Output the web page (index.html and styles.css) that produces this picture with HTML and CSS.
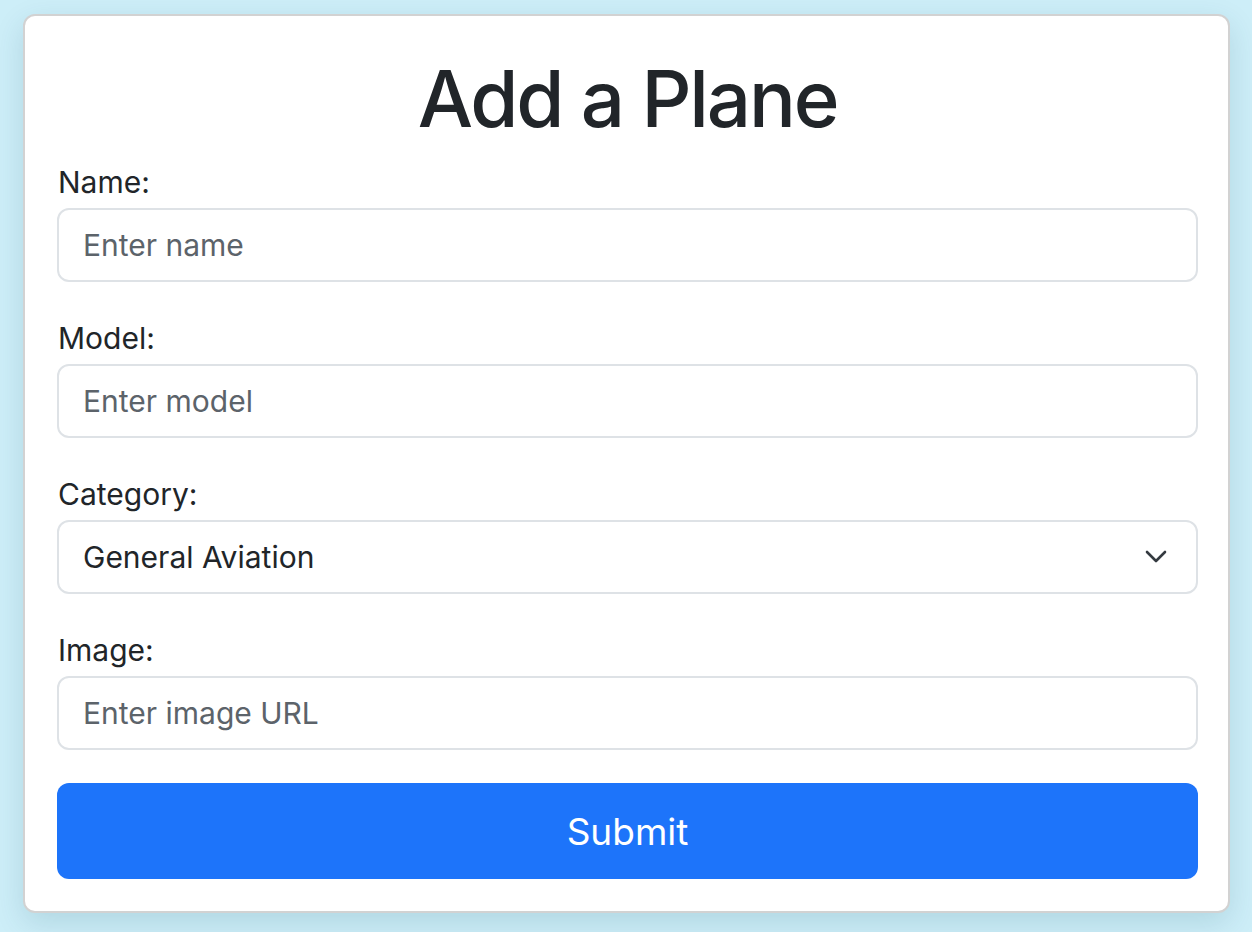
FILE: index.html
```html
<!DOCTYPE html>
<html lang="en">
<head>
<meta charset="utf-8">
<title>Add a Plane</title>
<link rel="stylesheet" href="styles.css">
</head>
<body>
<div class="card">
  <h1 class="title">Add a Plane</h1>
  <form class="form">
    <div class="group">
      <label class="label" for="name">Name:</label>
      <input class="control" id="name" type="text" placeholder="Enter name">
    </div>
    <div class="group">
      <label class="label" for="model">Model:</label>
      <input class="control" id="model" type="text" placeholder="Enter model">
    </div>
    <div class="group">
      <label class="label" for="category">Category:</label>
      <div class="select-wrap">
        <select class="control select" id="category">
          <option>General Aviation</option>
        </select>
        <svg class="chevron" width="22" height="14" viewBox="0 0 22 14"><path d="M2 2 L11 11 L20 2" fill="none" stroke="#343a40" stroke-width="2.6" stroke-linecap="round" stroke-linejoin="round"/></svg>
      </div>
    </div>
    <div class="group">
      <label class="label" for="image">Image:</label>
      <input class="control" id="image" type="text" placeholder="Enter image URL">
    </div>
    <button class="submit" type="button">Submit</button>
  </form>
</div>
</body>
</html>
```
FILE: styles.css
```css
html, body {
  margin: 0;
  padding: 0;
}
body {
  background: #cdeef8;
  font-family: Inter, "Liberation Sans", sans-serif;
  color: #212529;
  min-height: 932px;
}
.card {
  box-sizing: border-box;
  width: 1207px;
  margin: 14px 0 0 23px;
  background: #fff;
  border: 2px solid #d2d2d2;
  border-radius: 12px;
  box-shadow: 0 10px 30px rgba(0, 70, 90, 0.14);
  padding: 0 30px 32px 32px;
}
.title {
  margin: 0;
  padding-top: 28px;
  text-align: center;
  font-size: 78px;
  line-height: 110px;
  font-weight: 500;
  letter-spacing: -2.2px;
  color: #212529;
}
.form {
  display: flex;
  flex-direction: column;
}
.group {
  display: flex;
  flex-direction: column;
  margin-bottom: 38px;
}
.group:first-child {
  margin-top: 10px;
}
.group:nth-child(4) {
  margin-bottom: 33px;
}
.label {
  font-size: 30px;
  line-height: 36px;
  margin-bottom: 8px;
  padding-left: 1px;
  color: #212529;
}
.control {
  box-sizing: border-box;
  width: 100%;
  height: 74px;
  border: 2px solid #dee2e6;
  border-radius: 12px;
  padding: 0 24px;
  font-family: Inter, "Liberation Sans", sans-serif;
  font-size: 30px;
  color: #212529;
  background: #fff;
  outline: none;
}
.control::placeholder {
  color: #5c636a;
}
.select-wrap {
  position: relative;
}
.select {
  appearance: none;
  -webkit-appearance: none;
}
.chevron {
  position: absolute;
  right: 31px;
  top: 30px;
  pointer-events: none;
}
.submit {
  height: 96px;
  width: 100%;
  border: none;
  border-radius: 12px;
  background: #1d74fa;
  color: #fff;
  font-family: Inter, "Liberation Sans", sans-serif;
  font-size: 37px;
  cursor: pointer;
}
```
